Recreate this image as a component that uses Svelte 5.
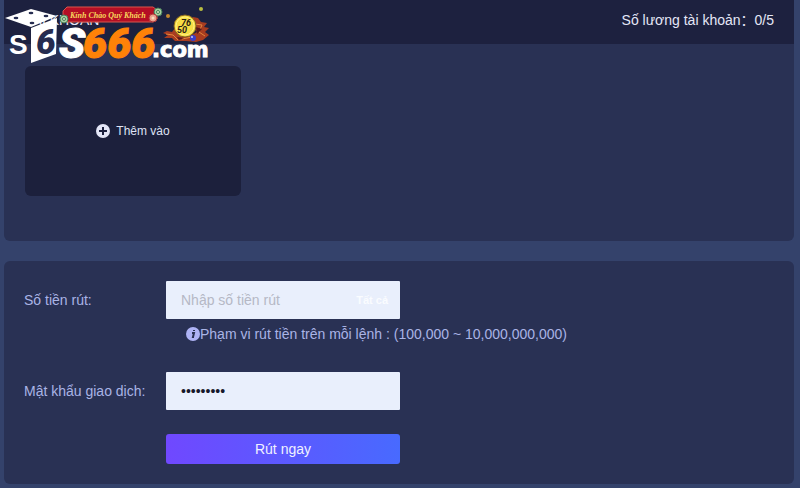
<script>
    let amount = $state("");
    let password = $state("matkhau66");
    const used = 0;
    const limit = 5;
    const range = "100,000 ~ 10,000,000,000";
</script>

<main>
    <section class="panel accounts">
        <header>
            <h1>Tài khoản</h1>
            <p>Số lương tài khoản：{used}/{limit}</p>
            <svg class="logo" viewBox="0 0 214 66" role="img" aria-label="S666.com">
                <text class="side" x="9" y="54" font-size="33">S</text>
                <path d="M5 18 31 9 57 16 31 27Z" fill="#fff" />
                <path d="M31 28 57 18 56 54 31 63Z" fill="#fff" />
                <g fill="#252c50">
                    <ellipse cx="16" cy="18" rx="2.4" ry="1.2" />
                    <ellipse cx="31" cy="13" rx="2.4" ry="1.2" />
                    <ellipse cx="32" cy="23" rx="2.4" ry="1.2" />
                    <ellipse cx="46" cy="16" rx="2.4" ry="1.2" />
                </g>
                <text class="mark dark" x="36" y="54" font-size="35">6</text>
                <text class="mark" x="59" y="58" font-size="43">S</text>
                <text class="mark orange" x="83" y="58" font-size="43">666</text>
                <text class="com" x="152" y="57" font-size="21">.com</text>
                <path d="M67 7h86l4 3v9l-4 3H65l-2-3v-8Z" fill="#b40f24" stroke="#d9564c" stroke-width="1" />
                <text class="ribbon" x="70" y="18" font-size="8">Kính Chào Quý Khách</text>
                <g stroke="#447e58">
                    <circle cx="64" cy="19" r="4" fill="#a9cfa2" />
                    <circle cx="158" cy="12" r="4" fill="#a9cfa2" />
                    <circle cx="64" cy="19" r="1.5" fill="#e5eacb" />
                    <circle cx="158" cy="12" r="1.5" fill="#e5eacb" />
                </g>
                <circle cx="153" cy="18" r="4" fill="#eba08e" stroke="#b13b3b" />
                <circle cx="153" cy="18" r="1.5" fill="#f8ddbd" />
                <path d="M163 33 167 31 172 32 175 28 180 35 192 35 197 32 190 21 193 17 198 18 201 22 207 23 204 27 209 28 205 32 209 35 203 40 196 42 186 41 175 41 172 38 164 38 168 35Z" fill="#a83c20" />
                <path d="M166 34 173 35 178 40M195 24 202 25 199 32 205 36M182 39 192 37" fill="none" stroke="#e3853c" stroke-width="1" />
                <path d="M196 27 202 29 197 34ZM177 37 184 38 179 40Z" fill="#57191c" />
                <circle cx="185" cy="26" r="11" fill="#f7dd43" stroke="#816022" />
                <circle cx="185" cy="26" r="9" fill="none" stroke="#fff184" />
                <text class="coin" x="181" y="26" font-size="9">76</text>
                <text class="coin" x="177" y="33" font-size="9">50</text>
                <circle cx="193" cy="38" r="3" fill="#393ecc" />
                <circle cx="192" cy="37" r="1" fill="#c9cdf4" />
                <circle cx="201" cy="9" r="2" fill="#b9bd40" />
                <circle cx="168" cy="16" r="2" fill="#c58730" />
            </svg>
        </header>
        <div class="cards">
            <button class="add" type="button">
                <svg viewBox="0 0 14 14" aria-hidden="true">
                    <circle cx="7" cy="7" r="7" fill="#e4e6f7" />
                    <path d="M7 3v8M3 7h8" stroke="#1c203d" stroke-width="2" />
                </svg>
                Thêm vào
            </button>
        </div>
    </section>

    <form class="panel withdraw" onsubmit={e => e.preventDefault()}>
        <label for="amount">Số tiền rút:</label>
        <div class="field">
            <input id="amount" type="text" placeholder="Nhập số tiền rút" bind:value={amount} />
            <button class="all" type="button">Tất cả</button>
        </div>
        <p class="hint">
            <svg viewBox="0 0 14 14" aria-hidden="true">
                <circle cx="7" cy="7" r="7" fill="#aeb3f5" />
                <path d="M6 6h2L7 10h1M8 3v1" fill="none" stroke="#293153" stroke-width="2" />
            </svg>
            <span>Phạm vi rút tiền trên mỗi lệnh : ({range})</span>
        </p>
        <label for="password">Mật khẩu giao dịch:</label>
        <input id="password" type="password" bind:value={password} />
        <button class="submit" type="submit">Rút ngay</button>
    </form>
</main>

<style>
    :global(body) {
        margin: 0;
        background: #34426b;
    }
    main {
        display: grid;
        gap: 20px;
        padding: 0 6px 4px 4px;
        font-family: "Liberation Sans", Arial, "Noto Sans CJK SC", sans-serif;
        font-size: 14px;
        line-height: 20px;
    }
    .panel {
        background: #293154;
        border-radius: 6px;
    }
    .accounts {
        border-radius: 0 0 6px 6px;
    }
    header {
        position: relative;
        display: flex;
        align-items: center;
        justify-content: space-between;
        height: 44px;
        padding: 0 20px;
        box-sizing: border-box;
        background: #1d213f;
        color: #e5e7f7;
    }
    h1,
    p {
        margin: 0;
        font-size: 14px;
        font-weight: 400;
    }
    h1,
    header p {
        padding-bottom: 4px;
    }
    h1 {
        text-transform: uppercase;
    }
    .logo {
        position: absolute;
        left: -4px;
        top: 0;
        width: 214px;
        height: 66px;
    }
    .mark {
        font-family: Roboto, sans-serif;
        font-style: italic;
        font-weight: 900;
        fill: #fff;
        stroke: #fff;
        stroke-width: 1px;
    }
    .side {
        font-family: "Liberation Sans", sans-serif;
        font-size: 28px;
        font-weight: 700;
        fill: #fff;
    }
    .dark {
        fill: #252c50;
        stroke: none;
    }
    .orange {
        fill: #ff8208;
        stroke: #ff8208;
    }
    .com {
        font-family: "DejaVu Sans", sans-serif;
        font-weight: 700;
        fill: #fff;
        stroke: #fff;
        stroke-width: 1px;
    }
    .ribbon {
        font-family: "Liberation Serif", serif;
        font-style: italic;
        font-weight: 700;
        fill: #f8d85c;
    }
    .coin {
        font-family: Roboto, sans-serif;
        font-style: italic;
        font-weight: 700;
        fill: #272114;
    }
    .cards {
        padding: 22px 21px 45px;
    }
    button {
        border: 0;
        font: inherit;
        cursor: pointer;
    }
    .add {
        display: flex;
        align-items: center;
        justify-content: center;
        gap: 6px;
        width: 216px;
        height: 130px;
        border-radius: 6px;
        background: #1c203c;
        color: #dfe2f4;
        font-size: 12px;
    }
    .add svg,
    .hint svg {
        width: 14px;
        height: 14px;
    }
    .withdraw {
        display: grid;
        grid-template-columns: 142px 234px 1fr;
        align-items: center;
        padding: 20px;
        color: #a9b4e6;
    }
    .withdraw label {
        grid-column: 1;
    }
    .field {
        position: relative;
    }
    input {
        display: block;
        width: 100%;
        height: 38px;
        box-sizing: border-box;
        padding: 0 15px;
        border: 0;
        border-radius: 1px;
        background: #e9effc;
        color: #17182a;
        font: inherit;
    }
    input::placeholder {
        color: #b5b8c5;
        opacity: 1;
    }
    .all {
        position: absolute;
        right: 12px;
        top: 9px;
        padding: 0;
        background: none;
        color: #fafcff;
        font-size: 11px;
        font-weight: 700;
    }
    .hint {
        grid-column: 2 / 4;
        display: flex;
        align-items: center;
        padding: 5px 0 28px 20px;
    }
    .submit {
        grid-column: 2;
        height: 30px;
        margin-top: 24px;
        border-radius: 3px;
        background: linear-gradient(90deg, #7048ff, #486aff);
        color: #f0f1ff;
    }
</style>
